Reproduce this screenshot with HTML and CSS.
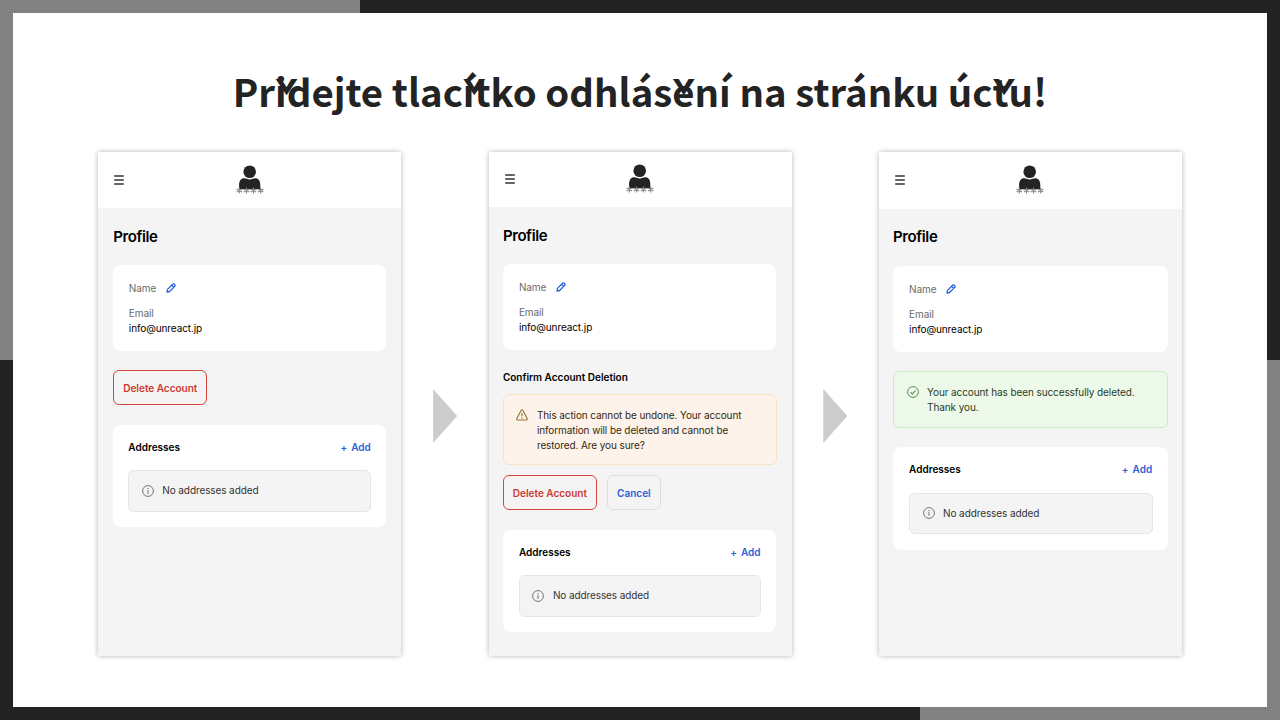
FILE: index.html
```
<!DOCTYPE html>
<html lang="cs">
<head>
    <meta charset="UTF-8">
    <meta name="viewport" content="width=device-width, initial-scale=1.0">
    <title>Profile</title>
    <link rel="stylesheet" href="styles.css">
</head>
<body>
<!-- Shared icons -->
<svg class="icon-defs" width="0" height="0">
    <symbol id="logo" viewBox="0 0 28 30">
        <circle cx="13.700" cy="6.700" r="6.300" fill="#232323"/>
        <path d="M3.100 24.200V20c0-4 2-6.700 5-6.700 2.200 0 3.200 1.200 5.600 1.200s3.400-1.200 5.600-1.200c3 0 5 2.700 5 6.700v4.200z" fill="#232323"/>
        <path d="M3.300 22.500v6M.6 24l5.400 3M6 24l-5.400 3M10.500 22.500v6M7.800 24l5.400 3M13.200 24l-5.400 3M17.500 22.500v6M14.800 24l5.400 3M20.200 24l-5.400 3M24.700 22.500v6M22 24l5.400 3M27.400 24l-5.400 3" stroke="#858585" stroke-width="1.100"/>
    </symbol>
    <symbol id="menu" viewBox="0 0 10 10">
        <path d="M.2 1h9.600M.2 5h9.600M.2 9h9.600" stroke="#333" stroke-width="1.300"/>
    </symbol>
    <symbol id="pencil" viewBox="0 0 10 10">
        <path d="M1 9l.5-2.600L6.600 1.300c.5-.5 1.200-.5 1.700 0l.4.4c.5.500.5 1.200 0 1.700L3.600 8.500zM5.600 2.300l2.100 2.100" fill="none" stroke="#2a5fd7" stroke-width="1.300" stroke-linejoin="round"/>
    </symbol>
    <symbol id="info" viewBox="0 0 12 12">
        <circle cx="6" cy="6" r="5.400" fill="none" stroke="#757575" stroke-width="1"/>
        <path d="M6 5.300v3.500M6 3v1.200" stroke="#757575" stroke-width="1.100"/>
    </symbol>
    <symbol id="warning" viewBox="0 0 12 12">
        <path d="M5.200 1.200c.4-.6 1.200-.6 1.600 0l4.400 8.400c.3.700-.1 1.400-.8 1.400H1.600c-.7 0-1.100-.7-.8-1.400z" fill="none" stroke="#94742d" stroke-width="1.100"/>
        <path d="M6 4v3.200M6 8.200v1.200" stroke="#94742d" stroke-width="1.100"/>
    </symbol>
    <symbol id="success" viewBox="0 0 12 12">
        <circle cx="6" cy="6" r="5.400" fill="none" stroke="#5a8f55" stroke-width="1"/>
        <path d="M3.500 6.200l1.800 1.700 3.200-3.300" fill="none" stroke="#5a8f55" stroke-width="1.100"/>
    </symbol>
</svg>

<div class="slide">
    <h1>Přidejte tlačítko odhlášení na stránku účtu!</h1>

    <div class="steps">
        <!-- Profile -->
        <div class="phone">
            <div class="topbar">
                <svg class="menu"><use href="#menu"/></svg>
                <svg class="logo"><use href="#logo"/></svg>
            </div>
            <div class="content">
                <h2>Profile</h2>
                <div class="card profile-card">
                    <div class="label name">Name <svg class="pencil"><use href="#pencil"/></svg></div>
                    <div class="label">Email</div>
                    <div class="value">info@unreact.jp</div>
                </div>
                <div class="actions">
                    <button class="btn delete">Delete Account</button>
                </div>
                <div class="card address-card">
                    <div class="card-header"><h3>Addresses</h3><a class="add">+<span>Add</span></a></div>
                    <div class="notice empty"><svg><use href="#info"/></svg><p>No addresses added</p></div>
                </div>
            </div>
        </div>

        <div class="arrow"></div>

        <!-- Confirm deletion -->
        <div class="phone phone-confirm">
            <div class="topbar">
                <svg class="menu"><use href="#menu"/></svg>
                <svg class="logo"><use href="#logo"/></svg>
            </div>
            <div class="content">
                <h2>Profile</h2>
                <div class="card profile-card">
                    <div class="label name">Name <svg class="pencil"><use href="#pencil"/></svg></div>
                    <div class="label">Email</div>
                    <div class="value">info@unreact.jp</div>
                </div>
                <h3 class="confirm-title">Confirm Account Deletion</h3>
                <div class="notice warning"><svg><use href="#warning"/></svg><p>This action cannot be undone. Your account<br>information will be deleted and cannot be<br>restored. Are you sure?</p></div>
                <div class="actions">
                    <button class="btn delete">Delete Account</button>
                    <button class="btn cancel">Cancel</button>
                </div>
                <div class="card address-card">
                    <div class="card-header"><h3>Addresses</h3><a class="add">+<span>Add</span></a></div>
                    <div class="notice empty"><svg><use href="#info"/></svg><p>No addresses added</p></div>
                </div>
            </div>
        </div>

        <div class="arrow"></div>

        <!-- Deleted -->
        <div class="phone phone-done">
            <div class="topbar">
                <svg class="menu"><use href="#menu"/></svg>
                <svg class="logo"><use href="#logo"/></svg>
            </div>
            <div class="content">
                <h2>Profile</h2>
                <div class="card profile-card">
                    <div class="label name">Name <svg class="pencil"><use href="#pencil"/></svg></div>
                    <div class="label">Email</div>
                    <div class="value">info@unreact.jp</div>
                </div>
                <div class="notice success"><svg><use href="#success"/></svg><p>Your account has been successfully deleted.<br>Thank you.</p></div>
                <div class="card address-card">
                    <div class="card-header"><h3>Addresses</h3><a class="add">+<span>Add</span></a></div>
                    <div class="notice empty"><svg><use href="#info"/></svg><p>No addresses added</p></div>
                </div>
            </div>
        </div>
    </div>
</div>
</body>
</html>
```
FILE: styles.css
```
* {
    box-sizing: border-box;
}
body {
    margin: 0;
    padding: 13px;
    height: 720px;
    overflow: hidden;
    font-family: Inter, sans-serif;
    background:
        linear-gradient(#828282, #828282) 0 0 / 360px 360px no-repeat,
        linear-gradient(#828282, #828282) 100% 100% / 360px 360px no-repeat,
        #232323;
}
.icon-defs {
    position: absolute;
}
.slide {
    height: 694px;
    padding-top: 48px;
    background: white;
}
h1 {
    margin: 0;
    height: 91px;
    line-height: 60px;
    text-align: center;
    white-space: nowrap;
    font-family: "Noto Sans CJK JP", sans-serif;
    font-size: 38.35px;
    font-weight: bold;
    color: #232323;
}
.steps {
    display: flex;
    justify-content: center;
    align-items: flex-start;
}
.phone {
    width: 303px;
    height: 504px;
    flex-shrink: 0;
    background: #f4f4f4;
    box-shadow: 0 0 5px rgba(0, 0, 0, 0.3);
}
.arrow {
    width: 24px;
    height: 54px;
    margin: 237px 31.4px 0 31.8px;
    background: #ccc;
    clip-path: polygon(0 0, 100% 50%, 0 100%);
}
.topbar {
    display: grid;
    grid-template-columns: 1fr 28px 1fr;
    height: 56px;
    padding: 12.5px 16px 0;
    background: white;
}
.topbar .menu {
    width: 10px;
    height: 10px;
    margin-top: 10.5px;
}
.topbar .logo {
    width: 28px;
    height: 30px;
}
.content {
    padding: 15.5px 15px 0;
}
h2 {
    margin: 0 0 16.5px;
    font-size: 15px;
    line-height: 25px;
    font-weight: 600;
    letter-spacing: -0.4px;
    color: black;
}
.card {
    border-radius: 8px;
    background: white;
}
.profile-card {
    height: 85.5px;
    padding: 15.5px 15.5px 0;
    font-size: 10px;
    line-height: 15px;
    letter-spacing: -0.1px;
}
.label {
    color: #6b6b6b;
}
.name {
    display: flex;
    align-items: center;
    gap: 10px;
    margin-bottom: 10px;
}
.pencil {
    width: 10px;
    height: 10px;
}
.actions {
    display: flex;
    gap: 10px;
    margin: 19.5px 0;
}
.btn {
    width: 94px;
    height: 35px;
    padding: 0;
    border: 1px solid #d6453f;
    border-radius: 6px;
    background: transparent;
    font-family: inherit;
    font-size: 10px;
    font-weight: 600;
    color: #cf3832;
    white-space: nowrap;
}
.cancel {
    width: 54px;
    border-color: #dedede;
    color: #2a5fd7;
}
.address-card {
    height: 102px;
    padding: 15px 15px 0;
}
.card-header {
    display: flex;
    justify-content: space-between;
    height: 30.5px;
    line-height: 15px;
}
h3 {
    margin: 0;
    font-size: 10px;
    line-height: 15px;
    font-weight: 600;
    color: black;
}
.add {
    display: flex;
    gap: 4px;
    padding-right: 0.5px;
    font-size: 10px;
    font-weight: 600;
    color: #2a5fd7;
}
.notice {
    display: flex;
    gap: 8.5px;
    padding: 12.5px 12.5px 0;
    border: 1px solid #e5e5e5;
    border-radius: 6px;
    font-size: 10px;
    line-height: 15.2px;
    letter-spacing: -0.1px;
}
.notice svg {
    flex-shrink: 0;
    width: 12px;
    height: 12px;
    margin-top: 1.5px;
}
.notice p {
    margin: 0;
    white-space: nowrap;
}
.empty {
    height: 41.5px;
    padding-top: 12px;
    background: #f4f4f4;
    color: #333;
}
.warning {
    width: 274px;
    height: 71px;
    border-color: #fae3c5;
    background: #fdf3ea;
    color: #33280f;
}
.success {
    height: 56.5px;
    margin: 19.5px -1px 19.5px 0;
    border-color: #c5efc0;
    background: #edf9e9;
    color: #2a3b27;
}
.confirm-title {
    margin: 20px 0 9.5px;
}

/* The confirm screen sits slightly higher, the last one slightly lower */
.phone-confirm .topbar {
    height: 55px;
    padding-top: 11.5px;
}
.phone-confirm .content,
.phone-done .content {
    padding-left: 14.4px;
}
.phone-confirm .content {
    padding-right: 15.5px;
}
.phone-confirm .profile-card,
.phone-done .profile-card {
    padding-left: 16px;
}
.phone-confirm .address-card,
.phone-done .address-card {
    padding-left: 16px;
}
.phone-confirm .actions {
    margin-top: 10px;
}
.phone-done .topbar {
    height: 56.5px;
}
.phone-done .profile-card {
    height: 86px;
    margin-right: -1px;
    padding-top: 16px;
}
.phone-done .address-card {
    height: 102.5px;
    margin-right: -1px;
}
```
